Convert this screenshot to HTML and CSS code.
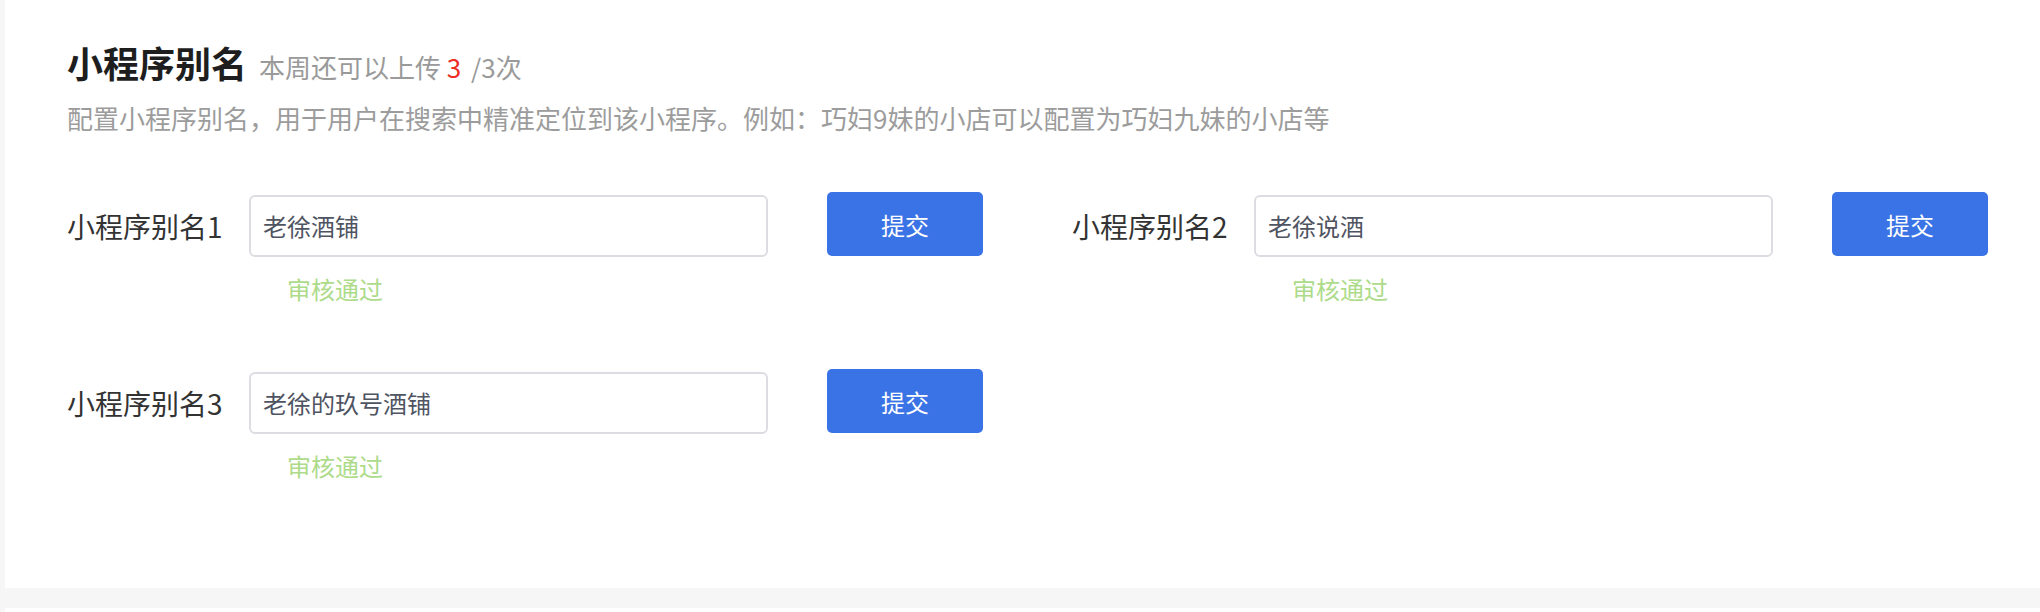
FILE: index.html
```html
<!DOCTYPE html>
<html lang="zh-CN">
<head>
<meta charset="utf-8">
<title>小程序别名</title>
<link rel="stylesheet" href="styles.css">
</head>
<body>
<div class="page">
  <section class="card">
    <header class="head">
      <h1 class="title">小程序别名</h1>
      <span class="quota">本周还可以上传 <em class="left">3</em> /3次</span>
    </header>
    <p class="desc">配置小程序别名，用于用户在搜索中精准定位到该小程序。例如：巧妇9妹的小店可以配置为巧妇九妹的小店等</p>
    <div class="grid">
      <div class="item">
        <div class="row">
          <label class="label">小程序别名1</label>
          <div class="input">老徐酒铺</div>
          <button class="btn">提交</button>
        </div>
        <div class="status">审核通过</div>
      </div>
      <div class="item">
        <div class="row">
          <label class="label">小程序别名2</label>
          <div class="input">老徐说酒</div>
          <button class="btn">提交</button>
        </div>
        <div class="status">审核通过</div>
      </div>
      <div class="item">
        <div class="row">
          <label class="label">小程序别名3</label>
          <div class="input">老徐的玖号酒铺</div>
          <button class="btn">提交</button>
        </div>
        <div class="status">审核通过</div>
      </div>
    </div>
  </section>
  <section class="card next"></section>
</div>
</body>
</html>
```
FILE: styles.css
```css
* { box-sizing: border-box; }
html, body {
  margin: 0;
  padding: 0;
  background: #f6f6f6;
  height: 612px;
  overflow: hidden;
}
body {
  font-family: "Noto Sans CJK SC", "Noto Sans", sans-serif;
}
.page {
  display: flex;
  flex-direction: column;
  gap: 20px;
  padding-left: 5px;
}
.card {
  background: #ffffff;
  padding: 38px 62px 0 62px;
  height: 588px;
}
.card.next {
  height: 4px;
  padding: 0;
}
.head {
  display: flex;
  align-items: baseline;
  gap: 12px;
  height: 48px;
}
.title {
  margin: 0;
  font-size: 36px;
  line-height: 48px;
  font-weight: 700;
  color: #1e1e1e;
}
.quota {
  font-size: 26px;
  color: #9a9a9a;
}
.quota .left {
  font-style: normal;
  color: #ee2d24;
  padding-right: 4px;
}
.desc {
  margin: 14px 0 0 0;
  font-size: 26px;
  line-height: 36px;
  color: #9c9c9c;
}
.grid {
  margin-top: 56px;
  display: grid;
  grid-template-columns: repeat(2, 916px);
  column-gap: 89px;
  row-gap: 62px;
}
.row {
  display: flex;
  align-items: flex-start;
  height: 65px;
}
.label {
  width: 182px;
  flex: none;
  font-size: 28px;
  line-height: 62px;
  margin-top: 3px;
  color: #333333;
}
.input {
  width: 519px;
  height: 62px;
  margin-top: 3px;
  flex: none;
  border: 2px solid #dcdde3;
  border-radius: 6px;
  padding: 0 12px;
  font-size: 24px;
  line-height: 58px;
  color: #4f5462;
}
.btn {
  margin-left: 59px;
  width: 156px;
  height: 64px;
  flex: none;
  border: none;
  border-radius: 5px;
  background: #3a73e5;
  color: #ffffff;
  font-family: inherit;
  font-size: 24px;
}
.status {
  margin: 14px 0 0 220px;
  font-size: 24px;
  line-height: 36px;
  color: #addb8a;
}
```
